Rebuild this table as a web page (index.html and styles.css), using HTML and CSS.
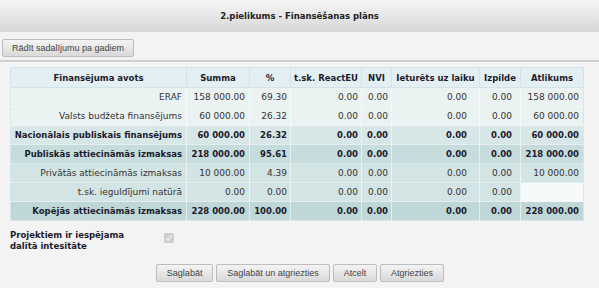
FILE: index.html
```html
<!DOCTYPE html>
<html lang="lv">
<head>
<meta charset="utf-8">
<title>2.pielikums - Finansēšanas plāns</title>
<link rel="stylesheet" href="styles.css">
</head>
<body>
<div class="titlebar">2.pielikums - Finansēšanas plāns</div>
<div class="toolbar"><button class="btn">Rādīt sadalījumu pa gadiem</button></div>
<div class="sep"></div>
<table class="fin">
  <colgroup>
    <col class="c1"><col class="c2"><col class="c3"><col class="c4"><col class="c5"><col class="c6"><col class="c7"><col class="c8">
  </colgroup>
  <thead>
    <tr><th>Finansējuma avots</th><th>Summa</th><th>%</th><th>t.sk. ReactEU</th><th>NVI</th><th>Ieturēts uz laiku</th><th>Izpilde</th><th>Atlikums</th></tr>
  </thead>
  <tbody>
    <tr class="r-light"><td>ERAF</td><td>158 000.00</td><td>69.30</td><td>0.00</td><td>0.00</td><td>0.00</td><td>0.00</td><td>158 000.00</td></tr>
    <tr class="r-light"><td>Valsts budžeta finansējums</td><td>60 000.00</td><td>26.32</td><td>0.00</td><td>0.00</td><td>0.00</td><td>0.00</td><td>60 000.00</td></tr>
    <tr class="r-nat b"><td>Nacionālais publiskais finansējums</td><td>60 000.00</td><td>26.32</td><td>0.00</td><td>0.00</td><td>0.00</td><td>0.00</td><td>60 000.00</td></tr>
    <tr class="r-pub b"><td>Publiskās attiecināmās izmaksas</td><td>218 000.00</td><td>95.61</td><td>0.00</td><td>0.00</td><td>0.00</td><td>0.00</td><td>218 000.00</td></tr>
    <tr class="r-priv"><td>Privātās attiecināmās izmaksas</td><td>10 000.00</td><td>4.39</td><td>0.00</td><td>0.00</td><td>0.00</td><td>0.00</td><td>10 000.00</td></tr>
    <tr class="r-priv"><td>t.sk. ieguldījumi natūrā</td><td>0.00</td><td>0.00</td><td>0.00</td><td>0.00</td><td>0.00</td><td>0.00</td><td class="empty"></td></tr>
    <tr class="r-tot b"><td>Kopējās attiecināmās izmaksas</td><td>228 000.00</td><td>100.00</td><td>0.00</td><td>0.00</td><td>0.00</td><td>0.00</td><td>228 000.00</td></tr>
  </tbody>
</table>
<div class="opt">
  <div class="opt-label">Projektiem ir iespējama<br>dalītā intesitāte</div>
  <input type="checkbox" class="chk" checked disabled>
</div>
<div class="actions">
  <button class="btn btn-wide">Saglabāt</button>
  <button class="btn btn-wide">Saglabāt un atgriezties</button>
  <button class="btn btn-wide">Atcelt</button>
  <button class="btn btn-wide">Atgriezties</button>
</div>
</body>
</html>
```

FILE: styles.css
```css
html, body { margin: 0; padding: 0; }
body {
  background: #f3f3f3;
  font-family: "DejaVu Sans", Verdana, sans-serif;
  font-size: 9px;
  color: #333;
  width: 599px;
  height: 288px;
  overflow: hidden;
}
.titlebar {
  height: 32px;
  line-height: 32px;
  text-align: center;
  font-weight: bold;
  font-size: 8.5px;
  color: #222;
  background: linear-gradient(#f6f6f6, #d7d7d7);
}
.toolbar { padding: 7px 0 0 2px; height: 21px; }
.btn {
  font-family: "Liberation Sans", Arial, sans-serif;
  font-size: 9px;
  color: #444;
  height: 18px;
  padding: 0 9px;
  border: 1px solid #bdbdbd;
  border-radius: 2px;
  background: linear-gradient(#f4f4f4, #d9d9d9);
  margin: 0;
}
.btn-wide { padding: 0 10px; }
.sep { height: 2px; background: #cfcfcf; border-bottom: 1px solid #fafafa; }
.fin {
  margin: 4px 0 0 10px;
  border-collapse: collapse;
  table-layout: fixed;
  width: 573px;
  border: 1px solid #d6e7eb;
}
.c1 { width: 176px; } .c2 { width: 63px; } .c3 { width: 41px; } .c4 { width: 71px; }
.c5 { width: 30px; } .c6 { width: 88px; } .c7 { width: 41px; } .c8 { width: 63px; }
.fin th {
  height: 19px;
  background: #e4eff3;
  color: #1b1b2e;
  font-weight: bold;
  font-size: 8.5px;
  text-align: center;
  border: 1px solid #d2e4e9;
  padding: 0 2px;
  white-space: nowrap;
}
.fin td {
  height: 18px;
  text-align: right;
  padding: 0 4px 0 2px;
  border-left: 1px solid rgba(255,255,255,0.55);
  border-top: 1px solid rgba(255,255,255,0.35);
  white-space: nowrap;
}
.fin td:nth-child(3) { padding-right: 3px; }
.fin td:nth-child(4) { padding-right: 3px; }
.fin td:nth-child(5) { padding-right: 3px; }
.fin td:nth-child(6) { padding-right: 12px; }
.fin td:nth-child(7) { padding-right: 8px; }
.fin td:first-child { border-left: none; }
.r-light td { background: #ebf2f2; }
.r-nat td { background: #d7e7e7; }
.r-pub td { background: #c7dddd; }
.r-priv td { background: #d3e4e4; }
.r-tot td { background: #bfd7d7; }
.fin td.empty { background: #f5f9f9; }
.b td { font-weight: bold; font-size: 8.5px; color: #1b1b2e; }
.opt {
  display: flex;
  align-items: flex-start;
  padding: 9px 0 0 10px;
  height: 34px;
}
.opt-label { font-weight: bold; font-size: 8.5px; color: #1b1b2e; width: 152px; line-height: 11px; }
.chk { margin: 3px 0 0 2px; width: 10px; height: 10px; }
.actions { text-align: center; padding-left: 1px; margin-top: 0; }
```
